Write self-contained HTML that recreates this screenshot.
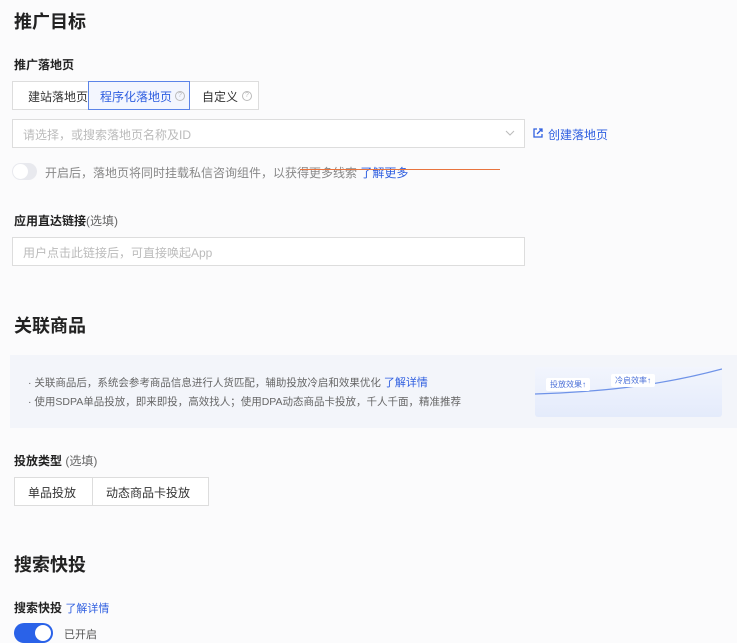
<!DOCTYPE html>
<html><head><meta charset="utf-8"><style>
*{box-sizing:border-box;margin:0;padding:0}
body{width:737px;height:635px;overflow:hidden;background:#fbfbfc;font-family:"Liberation Sans","Noto Sans CJK SC",sans-serif;color:#333;position:relative}
.a{position:absolute;white-space:nowrap}
.h{font-size:18px;font-weight:bold;color:#222}
.l{font-size:12px;font-weight:bold;color:#222}
.box{position:absolute;border:1px solid #ddd;background:#fff}
.ph{font-size:12px;color:#bbb}
.blue{color:#2f5fe0}
.q{position:absolute;width:10px;height:10px;border:1px solid #bbb;border-radius:50%;font-size:7px;line-height:8px;text-align:center;color:#bbb}
</style></head><body>
<div class="a h" style="left:14px;top:8px">推广目标</div>
<div class="a l" style="left:14px;top:56px">推广落地页</div>
<div class="box" style="left:12px;top:81px;width:77px;height:29px"></div>
<div class="a" style="left:28px;top:88px;font-size:12px;color:#333">建站落地页</div>
<div class="box" style="left:189px;top:81px;width:70px;height:29px"></div>
<div class="a" style="left:202px;top:88px;font-size:12px;color:#333">自定义</div>
<div class="box" style="left:88px;top:81px;width:102px;height:29px;border-color:#5b84e8;background:#f3f6fe"></div>
<div class="a blue" style="left:100px;top:88px;font-size:12px">程序化落地页</div>
<div class="q" style="left:175px;top:91px">?</div>
<div class="q" style="left:242px;top:91px">?</div>
<div class="box" style="left:12px;top:119px;width:513px;height:29px"></div>
<div class="a ph" style="left:23px;top:126px">请选择，或搜索落地页名称及ID</div>
<svg class="a" style="left:505px;top:130px" width="10" height="7"><path d="M1 1l4 4 4-4" fill="none" stroke="#bbb" stroke-width="1"/></svg>
<svg class="a" style="left:532px;top:127px" width="12" height="12"><path d="M5 2H2v8h8V7M7 2h3v3M10 2L5 7" fill="none" stroke="#2f5fe0" stroke-width="1.3"/></svg>
<div class="a blue" style="left:548px;top:126px;font-size:12px">创建落地页</div>
<div class="a" style="left:12px;top:163px;width:25px;height:17px;border-radius:9px;background:#e8e9ee"><div style="position:absolute;left:1px;top:1px;width:15px;height:15px;border-radius:50%;background:#fff"></div></div>
<div class="a" style="left:45px;top:164px;font-size:12px;color:#888">开启后，落地页将同时挂载私信咨询组件，以获得更多线索 <span class="blue">了解更多</span></div>
<div class="a" style="left:300px;top:169px;width:200px;height:1px;background:#e8743e"></div>
<div class="a l" style="left:14px;top:212px">应用直达链接<span style="font-weight:normal;color:#666">(选填)</span></div>
<div class="box" style="left:12px;top:237px;width:513px;height:29px"></div>
<div class="a ph" style="left:23px;top:244px">用户点击此链接后，可直接唤起App</div>
<div class="a h" style="left:14px;top:312px">关联商品</div>
<div class="a" style="left:10px;top:355px;width:727px;height:73px;background:#f3f5fa"></div>
<div class="a" style="left:28px;top:374px;font-size:10.5px;color:#666">· 关联商品后，系统会参考商品信息进行人货匹配，辅助投放冷启和效果优化 <span class="blue" style="font-size:11px">了解详情</span></div>
<div class="a" style="left:28px;top:394px;font-size:10.5px;color:#666">· 使用SDPA单品投放，即来即投，高效找人；使用DPA动态商品卡投放，千人千面，精准推荐</div>
<div class="a" style="left:535px;top:367px;width:187px;height:50px;background:linear-gradient(180deg,#f2f5fd,#e4ebfb);border-radius:3px"></div>
<svg class="a" style="left:535px;top:367px" width="187" height="50"><path d="M0 27C60 25 120 20 187 2" fill="none" stroke="#6f93e8" stroke-width="1.2"/></svg>
<div class="a" style="left:546px;top:378px;font-size:8px;color:#4b70d8;background:#fff;padding:1px 4px;border-radius:2px">投放效果↑</div>
<div class="a" style="left:611px;top:374px;font-size:8px;color:#4b70d8;background:#fff;padding:1px 4px;border-radius:2px">冷启效率↑</div>
<div class="a l" style="left:14px;top:452px">投放类型 <span style="font-weight:normal;color:#666">(选填)</span></div>
<div class="box" style="left:14px;top:477px;width:79px;height:29px"></div>
<div class="a" style="left:28px;top:484px;font-size:12px">单品投放</div>
<div class="box" style="left:92px;top:477px;width:117px;height:29px"></div>
<div class="a" style="left:106px;top:484px;font-size:12px">动态商品卡投放</div>
<div class="a h" style="left:14px;top:551px">搜索快投</div>
<div class="a l" style="left:14px;top:599px">搜索快投 <span class="blue" style="font-weight:normal;font-size:11px">了解详情</span></div>
<div class="a" style="left:14px;top:623px;width:39px;height:20px;border-radius:10px;background:#2a62e8"><div style="position:absolute;right:2px;top:2px;width:16px;height:16px;border-radius:50%;background:#fff"></div></div>
<div class="a" style="left:64px;top:626px;font-size:11px;color:#555">已开启</div>
</body></html>
